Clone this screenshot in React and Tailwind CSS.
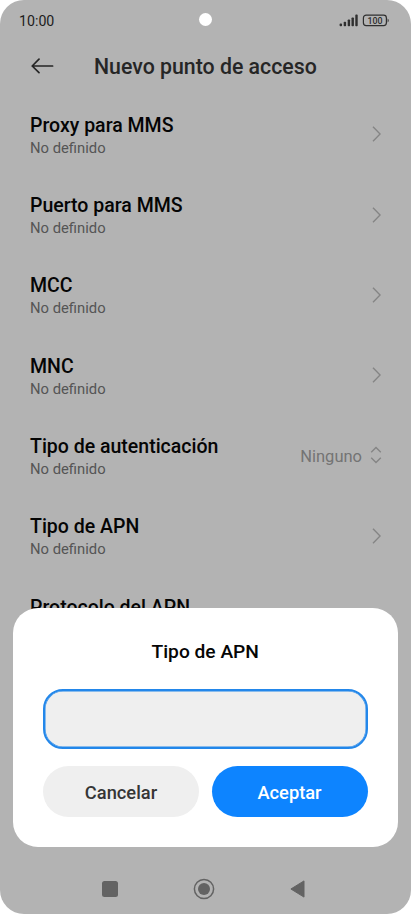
import { useState } from "react";

const settings = [
  { key: "mms-proxy", label: "Proxy para MMS" },
  { key: "mms-port", label: "Puerto para MMS" },
  { key: "mcc", label: "MCC" },
  { key: "mnc", label: "MNC" },
  { key: "auth", label: "Tipo de autenticación", value: "Ninguno" },
  { key: "apn-type", label: "Tipo de APN" },
  { key: "apn-protocol", label: "Protocolo del APN" },
];

function StatusBar() {
  return (
    <div className="relative flex h-10 shrink-0 items-center justify-between pl-[19px] pr-[21px]">
      <span className="pt-[2px] text-[14.2px] leading-5 text-[#1c1c1c]">10:00</span>
      <div className="absolute top-[13px] left-[198.5px] size-[13px] rounded-full bg-white" />
      <svg width="51" height="14" viewBox="0 0 51 14" className="text-[#2f2f2f]">
        <g fill="currentColor">
          <rect x="0.6" y="10.6" width="2.4" height="2.6" rx="0.8" />
          <rect x="4.7" y="8.8" width="2.4" height="4.4" rx="0.8" />
          <rect x="8.7" y="6.4" width="2.4" height="6.8" rx="0.8" />
          <rect x="12.5" y="4.4" width="2.4" height="8.8" rx="0.8" />
          <rect x="16.3" y="1.6" width="2.4" height="11.6" rx="0.8" />
          <path d="M48.6 5.4a2.4 2.4 0 0 1 0 4z" />
        </g>
        <rect x="24.4" y="2.2" width="23" height="10.4" rx="2.8" fill="none" stroke="currentColor" strokeWidth="1.2" />
        <text x="36" y="10.6" textAnchor="middle" fontSize="8.8" fontWeight="500" fill="currentColor">100</text>
      </svg>
    </div>
  );
}

function Header() {
  return (
    <div className="flex h-[54px] shrink-0 items-center pl-[31px] text-[#262626]">
      <svg width="23" height="16" viewBox="0 0 23 16" fill="none" stroke="currentColor" strokeWidth="1.7" strokeLinecap="round" strokeLinejoin="round" className="-mt-[3px]">
        <path d="M21.6 8H1.2M8 1.2 1.2 8 8 14.6" />
      </svg>
      <h1 className="ml-[40px] text-[21.3px] leading-7 font-medium whitespace-nowrap">Nuevo punto de acceso</h1>
    </div>
  );
}

function SettingRow({ label, value }) {
  return (
    <div className="flex h-[80.35px] shrink-0 items-center justify-between pl-[30px] pr-[30px]">
      <div className="pt-1">
        <div className="text-[19.5px] leading-[24px] font-medium text-[#050505]">{label}</div>
        <div className="text-[14.8px] leading-[21px] text-[#555]">No definido</div>
      </div>
      {value ? (
        <div className="-mr-px flex items-center gap-2 text-[#747474]">
          <span className="pt-[2px] text-[16.5px] leading-5">{value}</span>
          <svg width="12" height="18" viewBox="0 0 12 18" fill="none" stroke="#858585" strokeWidth="1.4" className="-mt-px">
            <path d="M1.2 6.2 6 1.4l4.8 4.8M1.2 11.8 6 16.6l4.8-4.8" />
          </svg>
        </div>
      ) : (
        <svg width="10" height="16" viewBox="0 0 10 16" fill="none" stroke="#858585" strokeWidth="1.4">
          <path d="M2 0.8 9.1 8 2 15.2" />
        </svg>
      )}
    </div>
  );
}

function ApnDialog() {
  const [apn, setApn] = useState("");

  return (
    <div role="dialog" className="absolute top-[608px] left-[13px] flex h-[239px] w-[384.5px] flex-col rounded-[25px] bg-white px-[30px]">
      <h2 className="mt-[30px] text-center text-[19.2px] leading-7 font-medium text-[#050505]">Tipo de APN</h2>
      <input
        value={apn}
        onChange={(e) => setApn(e.target.value)}
        className="mt-[23px] h-[60px] w-full shrink-0 rounded-[20px] border-2 border-[#2387ea] bg-[#efefef] px-4 text-lg shadow-[inset_0_0_0_0.5px_#2387ea] outline-none"
      />
      <div className="mt-[17px] grid grid-cols-2 gap-[12.5px] text-[18.3px] font-medium">
        <button className="h-[51px] rounded-full bg-[#efefef] pt-[2px] text-[#363636]">Cancelar</button>
        <button className="h-[51px] rounded-full bg-[#0d84ff] pt-[2px] text-white">Aceptar</button>
      </div>
    </div>
  );
}

function NavBar() {
  return (
    <div className="absolute bottom-0 left-0 flex h-[50px] w-full items-center pl-[102px] text-[#636363]">
      <div className="size-[16px] rounded-[2.5px] bg-[#636363]" />
      <svg width="22" height="22" viewBox="0 0 22 22" className="ml-[75px]">
        <circle cx="11" cy="11" r="9.6" fill="none" stroke="currentColor" strokeWidth="1.5" />
        <circle cx="11" cy="11" r="6" fill="currentColor" />
      </svg>
      <svg width="15" height="18" viewBox="0 0 15 18" className="ml-[75px]">
        <path d="M14 .9v16.2L.9 9z" fill="currentColor" stroke="currentColor" strokeWidth="1" strokeLinejoin="round" />
      </svg>
    </div>
  );
}

export default function App() {
  return (
    <div className="h-[914px] w-[411px] bg-white font-['Roboto',sans-serif]">
      <div className="relative flex h-full w-full flex-col overflow-hidden rounded-[24px] bg-[#b3b3b3]">
        <StatusBar />
        <Header />
        <div className="flex flex-col">
          {settings.map((item) => (
            <SettingRow key={item.key} label={item.label} value={item.value} />
          ))}
        </div>
        <ApnDialog />
        <NavBar />
      </div>
    </div>
  );
}
